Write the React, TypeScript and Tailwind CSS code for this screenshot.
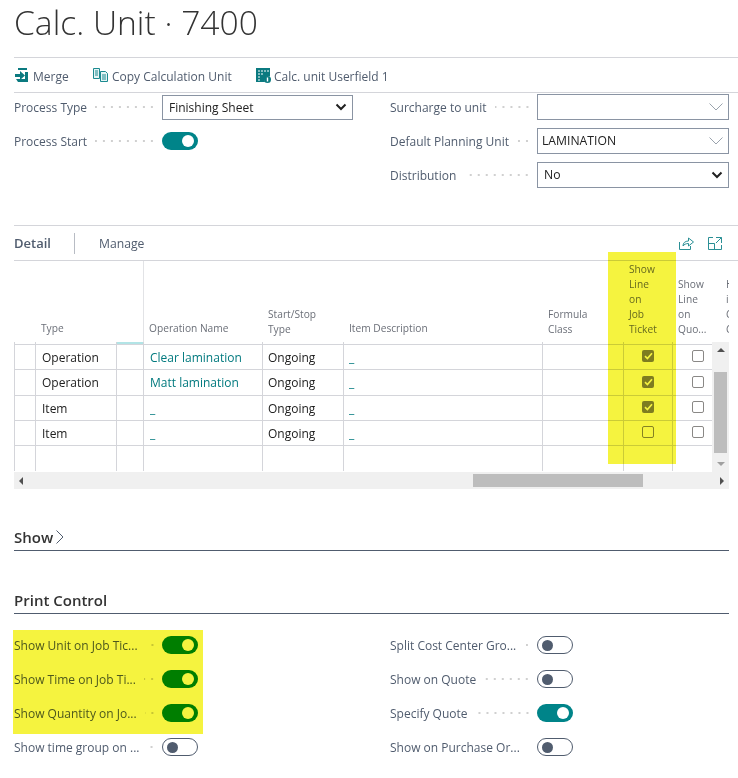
import React from "react";

const F = "font-['Open_Sans','Noto_Sans',sans-serif]";

function Dots() {
  return <span className="flex-1 h-[4px] ml-[8px] mr-[6px] bg-[radial-gradient(circle,#d0d0d0_0.9px,transparent_1.1px)] bg-[length:8px_4px] bg-repeat-x bg-right" />;
}

function Toggle({ on, green }: { on?: boolean; green?: boolean }) {
  if (on) {
    return (
      <span className={"w-[36px] h-[18px] rounded-full flex items-center justify-end pr-[4px] shrink-0 " + (green ? "bg-[#008400]" : "bg-[#008489]")}>
        <span className="w-[12px] h-[12px] rounded-full bg-white" />
      </span>
    );
  }
  return (
    <span className="w-[36px] h-[18px] rounded-full border border-[#505c6e] bg-white flex items-center pl-[4px] shrink-0">
      <span className="w-[11px] h-[11px] rounded-full bg-[#505c6e]" />
    </span>
  );
}

function Chevron({ dark }: { dark?: boolean }) {
  return dark ? (
    <svg width="12" height="8" viewBox="0 0 12 8" className="shrink-0"><path d="M1.5 1.500 6 6l4.500-4.500" fill="none" stroke="#212121" strokeWidth="2" /></svg>
  ) : (
    <svg width="14" height="8" viewBox="0 0 14 8" className="shrink-0"><path d="M.5.5 7 7 13.500.5" fill="none" stroke="#9aa3ad" strokeWidth="1" /></svg>
  );
}

function Select({ value, dark, px }: { value: string; dark?: boolean; px?: string }) {
  return (
    <div className={"flex-1 h-[26px] border border-[#8a94a3] flex items-center justify-between pr-[5px] " + (px || "pl-[5px]")}>
      <span className="text-[12.2px] text-[#212121] pt-px">{value}</span>
      <Chevron dark={dark} />
    </div>
  );
}

function Field({ label, children, right }: { label: string; children: React.ReactNode; right?: boolean }) {
  return (
    <div className="flex items-center h-[34px]">
      <div className={"flex items-center shrink-0 " + (right ? "w-[147px]" : "w-[148px]")}>
        <span className="text-[12px] text-[#505c6e] whitespace-nowrap pt-[2px]">{label}</span>
        <Dots />
      </div>
      {children}
    </div>
  );
}

const COLS = [22, 81, 27, 119, 81, 199, 81, 49, 56];
const ROWS = [
  { h: "h-[25px]", t: "pt-[2px]", type: "Operation", name: "Clear lamination", a: true },
  { h: "h-[26px]", t: "pt-[1px]", type: "Operation", name: "Matt lamination", a: true },
  { h: "h-[25px]", t: "pt-[1px]", type: "Item", name: "_", a: true },
  { h: "h-[25px]", t: "pt-[2px]", type: "Item", name: "_", a: false },
  { h: "h-[26px]", t: "pt-[2px]", type: "", name: "", a: false, empty: true },
];

function Check({ on }: { on?: boolean }) {
  return on ? (
    <span className="w-[12px] h-[12px] rounded-[2px] bg-[#838280] flex items-center justify-center">
      <svg width="9" height="8" viewBox="0 0 9 8"><path d="M1 4.200 3.400 6.500 8 1.200" fill="none" stroke="white" strokeWidth="1.700" /></svg>
    </span>
  ) : (
    <span className="w-[12px] h-[12px] rounded-[2px] border border-[#8a8886] bg-white" />
  );
}

function Cell({ w, children, className = "" }: { w: number; children?: React.ReactNode; className?: string }) {
  return (
    <div style={{ width: w }} className={"shrink-0 border-r border-[#d4d5da] h-full flex items-center overflow-hidden whitespace-nowrap text-[12px] " + className}>
      {children}
    </div>
  );
}

function Head({ w, children, className = "" }: { w: number; children?: React.ReactNode; className?: string }) {
  return (
    <div style={{ width: w }} className={"shrink-0 h-full flex items-end pl-[5px] text-[10.2px] leading-[15px] text-[#6b6f78] overflow-hidden " + (className || "pb-[5px]")}>
      <div>{children}</div>
    </div>
  );
}

export default function App() {
  return (
    <div className={"w-[738px] h-[778px] bg-white overflow-hidden relative pl-[14px] pr-[9px] " + F}>
      <h1 className="h-[57px] text-[33.6px] font-light leading-[44px] text-[#333] whitespace-nowrap">Calc. Unit · 7400</h1>

      <div className="h-[36px] border-y border-[#d4d5da] flex items-center text-[12px] text-[#505c6e] -mr-[9px]">
        <span className="flex items-center w-[79px]">
          <svg width="14" height="16" viewBox="0 0 14 16" className="ml-[1px] mr-[4px]">
            <path d="M3 1h9v2H3zM1 12h9v3H3zM10 5h3v10h-3z" fill="#0b7a80" />
            <path d="M0 7h5V4l5 4.500L5 13v-3H0z" fill="#0b7a80" />
          </svg>
          <span className="pt-[3px]">Merge</span>
        </span>
        <span className="flex items-center w-[163px]">
          <svg width="15" height="14" viewBox="0 0 15 14" className="mr-[4px]">
            <path d="M.5.5h6v10h-6zM7.500 3.500h5l2 2v8h-7z" fill="#e6f4f5" stroke="#1b8a90" />
            <path d="M2 3h3M2 5h3M2 7h3M9 7h4M9 9h4M9 11h4" stroke="#1b8a90" />
          </svg>
          <span className="pt-[3px]">Copy Calculation Unit</span>
        </span>
        <span className="flex items-center">
          <svg width="15" height="15" viewBox="0 0 15 15" className="mr-[3px]">
            <path d="M0 0h14v8.500a4 4 0 0 0-5 5.500H0z" fill="#0b7a80" />
            <path d="M2 3h2M5 3h2M8 3h2M11 3h2M2 6h2M5 6h2M2 9h2M2 12h2" stroke="#fff" />
            <circle cx="11.500" cy="11.500" r="3.500" fill="#0b7a80" />
            <path d="M11.500 9.500v4" stroke="#fff" strokeWidth="1.400" />
          </svg>
          <span className="pt-[3px]">Calc. unit Userfield 1</span>
        </span>
      </div>

      <div className="h-[132px] flex -mt-[3px] mb-[3px]">
        <div className="w-[339px]">
          <Field label="Process Type">
            <div className="w-[191px] h-[25px] border border-[#8a94a3] flex items-center justify-between pl-[6px] pr-[5px]">
              <span className="text-[12px] text-[#212121] pt-px">Finishing Sheet</span>
              <Chevron dark />
            </div>
          </Field>
          <Field label="Process Start"><Toggle on /></Field>
        </div>
        <div className="flex-1 ml-[37px]">
          <Field label="Surcharge to unit" right><Select value="" /></Field>
          <Field label="Default Planning Unit" right><Select value="LAMINATION" px="pl-[4px]" /></Field>
          <Field label="Distribution" right><Select value="No" dark px="pl-[6px]" /></Field>
        </div>
      </div>

      <div className="h-[36px] border-y border-[#d4d5da] flex items-center -mr-[9px] pr-[9px]">
        <span className="text-[13px] font-semibold text-[#505c6e] w-[60px] pt-[2px]">Detail</span>
        <span className="w-px h-[21px] bg-[#b8bcc4]" />
        <span className="text-[12.2px] text-[#505c6e] ml-[24px] pt-[2px]">Manage</span>
        <span className="ml-auto flex items-center gap-[14px] pr-[7px]">
          <svg width="15" height="13" viewBox="0 0 15 13"><path d="M.5 5v7.500h11V9M4 9c0-3 2-5 5.500-5V1l5 4-5 4V6.500C7 6.500 5 7.500 4 9z" fill="none" stroke="#2a8f95" /></svg>
          <svg width="14" height="13" viewBox="0 0 14 13"><path d="M5 .5H.5v12h13V8M.5 6.500h6v6M8 .5h5.500V6M13.500.5 8 6" fill="none" stroke="#2a8f95" /></svg>
        </span>
      </div>

      <div className="w-[715px] h-[228px] relative overflow-hidden">
        <div className="flex h-[81px]">
          <Head w={22} />
          <Head w={81} className="pb-[6px]">Type</Head>
          <Head w={26} />
          <Head w={120} className="pb-[6px] border-l border-[#e2e3e6]">Operation Name</Head>
          <Head w={81}>Start/Stop<br />Type</Head>
          <Head w={199} className="pb-[6px]">Item Description</Head>
          <Head w={81}>Formula<br />Class</Head>
          <Head w={49}>Show<br />Line<br />on<br />Job<br />Ticket</Head>
          <Head w={49}>Show<br />Line<br />on<br />Quo...</Head>
          <Head w={7} className="pb-[5px] !pl-[4px]">H<br />i<br />C<br />C</Head>
        </div>
        <div className="flex h-[2px] border-l border-[#d4d5da]">
          {COLS.map((w, i) => (
            <div key={i} style={{ width: i === 0 ? w - 1 : w }} className={"h-full shrink-0 " + (i < COLS.length - 1 ? "border-r border-[#d4d5da] " : "") + (i === 2 ? "bg-[#b2e4e6]" : "")} />
          ))}
        </div>
        {ROWS.map((r, idx) => (
          <div key={idx} className={"flex border-t border-[#d4d5da] " + r.h}>
            <Cell w={22} className="border-l" />
            <Cell w={81} className={"pl-[6px] text-[#212121] " + r.t}>{r.type}</Cell>
            <Cell w={27} />
            <Cell w={119} className={"pl-[6px] text-[#00797e] " + r.t}>{r.name}</Cell>
            <Cell w={81} className={"pl-[5px] text-[#212121] " + r.t}>{!r.empty && "Ongoing"}</Cell>
            <Cell w={199} className={"pl-[5px] text-[#00797e] " + r.t}>{!r.empty && "_"}</Cell>
            <Cell w={81} />
            <Cell w={49} className="justify-center pb-[2px]">{!r.empty && <Check on={r.a} />}</Cell>
            <div className="flex w-[49px] justify-center items-center pb-[2px]">{!r.empty && <Check />}</div>
          </div>
        ))}
        <div className="absolute top-[81px] right-0 w-[17px] h-[130px] bg-[#f0f0f0] flex flex-col items-center justify-between py-[6px]">
          <span className="w-0 h-0 border-x-[4px] border-x-transparent border-b-[4px] border-b-[#505050]" />
          <span className="absolute left-[2px] right-[2px] top-[30px] h-[81px] bg-[#bdbdbd]" />
          <span className="w-0 h-0 border-x-[4px] border-x-transparent border-t-[4px] border-t-[#a0a0a0]" />
        </div>
        <div className="absolute bottom-0 left-0 right-0 h-[17px] bg-[#f0f0f0] flex items-center justify-between px-[5px]">
          <span className="w-0 h-0 border-y-[4px] border-y-transparent border-r-[4px] border-r-[#505050]" />
          <span className="absolute left-[459px] w-[170px] top-[2px] h-[13px] bg-[#bdbdbd]" />
          <span className="w-0 h-0 border-y-[4px] border-y-transparent border-l-[4px] border-l-[#505050]" />
        </div>
      </div>

      <div className="mt-[35px] h-[27px] border-b border-[#505c6e] flex items-center w-[715px]">
        <span className="text-[15px] font-semibold text-[#333]">Show</span>
        <svg width="8" height="14" viewBox="0 0 8 14" className="ml-[3px]"><path d="M.5.5 7 7 .5 13.500" fill="none" stroke="#505c6e" /></svg>
      </div>

      <div className="mt-[36px] h-[27px] border-b border-[#505c6e] flex items-center w-[715px]">
        <span className="text-[15px] font-semibold text-[#333]">Print Control</span>
      </div>

      <div className="flex mt-[14px]">
        <div className="w-[376px]">
          {["Show Unit on Job Tic...", "Show Time on Job Ti...", "Show Quantity on Jo...", "Show time group on ..."].map((t, i) => (
            <Field key={t} label={t}><Toggle on={i < 3} green /></Field>
          ))}
        </div>
        <div className="flex-1">
          {["Split Cost Center Gro...", "Show on Quote", "Specify Quote", "Show on Purchase Or..."].map((t, i) => (
            <Field key={t} label={t} right><Toggle on={i === 2} /></Field>
          ))}
        </div>
      </div>

      <div className="absolute left-[608px] top-[252px] w-[68px] h-[212px] bg-[#f5f33f] mix-blend-multiply" />
      <div className="absolute left-[13px] top-[630px] w-[190px] h-[104px] bg-[#f5f33f] mix-blend-multiply" />
    </div>
  );
}
